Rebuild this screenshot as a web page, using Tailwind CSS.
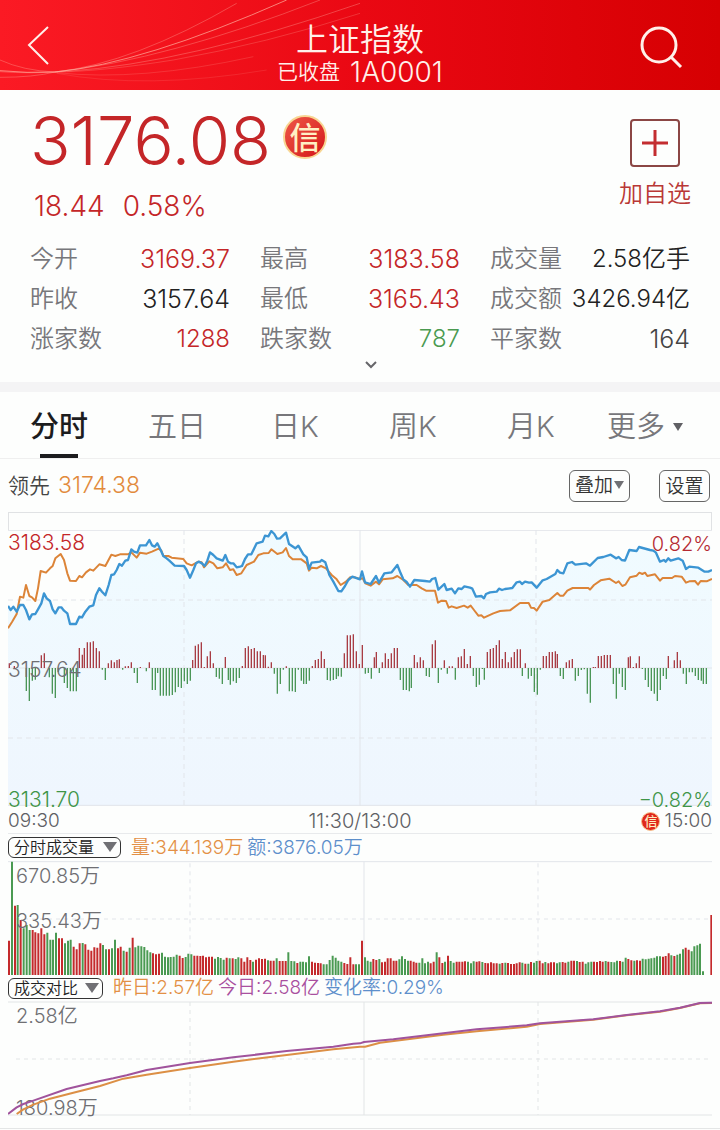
<!DOCTYPE html>
<html lang="zh-CN">
<head>
<meta charset="utf-8">
<meta name="viewport" content="width=device-width, initial-scale=1">
<title>上证指数 1A0001</title>
<script src="https://cdn.jsdelivr.net/npm/@tailwindcss/browser@4"></script>
</head>
<body class="bg-[#fdfefd] font-['Inter','Noto_Sans_CJK_SC',sans-serif] font-[350] text-[#6f6f73]">

<header class="relative flex h-[90px] items-center justify-between overflow-hidden bg-linear-to-r from-[#fb1a24] via-[#ea0813] to-[#d60002] text-[#fff0ea]">
  <svg class="absolute inset-y-0 left-0 h-[90px] w-[360px]" viewBox="0 0 1080 270" fill="none" stroke="#ffb0a0" stroke-width="3" aria-hidden="true">
    <path d="M0 180Q70 212 165 216Q400 190 710 10" opacity=".35"/>
    <path d="M0 212Q80 220 165 216Q430 190 860 0" opacity=".7"/>
    <path d="M0 232Q100 232 165 216Q500 180 960 0" opacity=".35"/>
    <path d="M0 215Q90 222 200 214Q560 190 1080 10" opacity=".35"/>
    <path d="M165 216Q300 215 520 180Q800 130 1080 40" opacity=".25"/>
    <path d="M170 218Q420 245 760 170" opacity=".2"/>
    <path d="M170 220Q440 270 800 210" opacity=".15"/>
  </svg>
  <button type="button" aria-label="返回" class="relative ml-6 w-16">
    <svg class="h-10 w-7" viewBox="0 0 28 40" fill="none" stroke="currentColor" stroke-width="2"><path d="M24 2 5 20 24 39"/></svg>
  </button>
  <div class="relative pt-[18px] text-center">
    <h1 class="text-[32px] leading-9 font-[350]">上证指数</h1>
    <p class="flex items-center justify-center gap-[10px] text-[21px] leading-7">已收盘 <span class="text-[28px]">1A0001</span></p>
  </div>
  <button type="button" aria-label="搜索" class="relative mr-8 flex w-14 justify-end pr-1">
    <svg class="h-12 w-11" viewBox="0 0 44 48" fill="none" stroke="currentColor" stroke-width="3"><circle cx="19" cy="24" r="17"/><path d="m31 36 10 10"/></svg>
  </button>
</header>

<main>
  <section class="px-[30px] pt-[18px] pb-3">
    <div class="flex items-start justify-between">
      <div>
        <div class="flex items-center gap-3 text-[#c42628]">
          <strong class="text-[67px] leading-[66px] font-[350]">3176.08</strong>
          <span class="-mt-2 flex size-11 items-center justify-center rounded-full border-2 border-[#f8d693] bg-linear-to-br from-[#ee5546] to-[#d40817] text-[31px] leading-none font-medium text-[#fff0c4]">信</span>
        </div>
        <p class="mt-3 flex gap-[18px] pl-1 text-[28px] leading-10 text-[#c42628]"><span>18.44</span><span>0.58%</span></p>
      </div>
      <button type="button" class="-mr-px mt-[11px] flex flex-col items-center gap-[9px] text-2xl leading-9 text-[#b93836]">
        <svg class="h-12 w-[50px]" viewBox="0 0 50 48" fill="none" stroke-width="2"><rect x="1" y="1" width="48" height="46" rx="3" stroke="#8b4644"/><path d="M12 24H38M25 11V37" stroke="#c32d30" stroke-width="3"/></svg>
        加自选
      </button>
    </div>
    <dl class="mt-[13px] grid grid-cols-3 gap-x-[30px] text-2xl leading-10 whitespace-nowrap text-[#222]">
      <div class="flex justify-between"><dt class="text-[#77777b]">今开</dt><dd class="text-[25px] leading-10 text-[#c42628]">3169.37</dd></div>
      <div class="flex justify-between"><dt class="text-[#77777b]">最高</dt><dd class="text-[25px] leading-10 text-[#c42628]">3183.58</dd></div>
      <div class="flex justify-between"><dt class="text-[#77777b]">成交量</dt><dd>2.58亿手</dd></div>
      <div class="flex justify-between"><dt class="text-[#77777b]">昨收</dt><dd class="text-[25px] leading-10">3157.64</dd></div>
      <div class="flex justify-between"><dt class="text-[#77777b]">最低</dt><dd class="text-[25px] leading-10 text-[#c42628]">3165.43</dd></div>
      <div class="flex justify-between"><dt class="text-[#77777b]">成交额</dt><dd>3426.94亿</dd></div>
      <div class="flex justify-between"><dt class="text-[#77777b]">涨家数</dt><dd class="text-[#c42628]">1288</dd></div>
      <div class="flex justify-between"><dt class="text-[#77777b]">跌家数</dt><dd class="text-[#4a9a50]">787</dd></div>
      <div class="flex justify-between"><dt class="text-[#77777b]">平家数</dt><dd class="text-[25px] leading-10 text-[#444]">164</dd></div>
    </dl>
    <button type="button" aria-label="展开" class="flex h-[11px] w-full items-center justify-center pl-[22px]">
      <svg class="h-2 w-3" viewBox="0 0 12 8" fill="none" stroke="#66666a" stroke-width="2"><path d="m1 1 5 5 5-5"/></svg>
    </button>
  </section>

  <div class="h-[10px] bg-[#f4f4f5]"></div>

  <nav class="grid h-[67px] grid-cols-6 border-b border-[#efefef] pr-3 text-[29px] text-[#77777b]">
    <button type="button" aria-current="true" class="flex flex-col items-center justify-between pt-[13px] font-medium text-[#1c1c1e]"><span class="leading-[44px]">分时</span><span class="h-1 w-[38px] bg-[#1c1c1e]"></span></button>
    <button type="button" class="pt-[13px] pb-[9px] leading-[44px]">五日</button>
    <button type="button" class="pt-[13px] pb-[9px] leading-[44px]">日K</button>
    <button type="button" class="pt-[13px] pb-[9px] leading-[44px]">周K</button>
    <button type="button" class="pt-[13px] pb-[9px] leading-[44px]">月K</button>
    <button type="button" class="flex items-center justify-center gap-2 pt-[13px] pr-2 pb-[9px] leading-[44px] whitespace-nowrap">更多<svg class="h-2 w-[10px]" viewBox="0 0 10 8" fill="#606064"><path d="M0 0H10L5 8Z"/></svg></button>
  </nav>

  <div class="flex h-[53px] items-center justify-between pr-[10px] pl-2">
    <p class="flex items-center gap-2 text-[23px] text-[#e28a3c]"><span class="text-[21px] text-[#444]">领先</span>3174.38</p>
    <div class="flex gap-[29px] text-[19px] text-[#333]">
      <button type="button" class="flex h-8 w-[61px] items-center justify-center gap-px rounded-md border border-[#666] pt-[2px]">叠加<svg class="-mt-1 h-2 w-[10px]" viewBox="0 0 10 8" fill="#707074"><path d="M0 0H10L5 8Z"/></svg></button>
      <button type="button" class="h-8 w-[51px] rounded-md border border-[#666] pt-[2px]">设置</button>
    </div>
  </div>

  <section class="px-2" aria-label="分时走势">
    <div class="h-[18px] border border-b-0 border-[#e0e2e4]"></div>
    <div class="relative h-[276px] text-[21px] leading-6">
      <svg class="block h-full w-full" viewBox="24 30 2112 828" preserveAspectRatio="none" fill="none">
        <defs>
          <linearGradient id="area" x1="0" y1="0" x2="0" y2="1"><stop offset="0" stop-color="#f0fbff"/><stop offset="1" stop-color="#eff6fe"/></linearGradient>
        </defs>
        <polygon id="priceArea" fill="url(#area)"/>
        <g stroke="#e2e5ea" stroke-width="3">
          <path d="M24 31H2136M24 856H2136M1080 30V858M24 444H2136"/>
          <path d="M552 30V858M1608 30V858M24 240H2136M24 654H2136" stroke-dasharray="15 12"/>
        </g>
        <g stroke-width="4">
          <path id="upBars" stroke="#a83c44"/>
          <path id="downBars" stroke="#4b9657"/>
        </g>
        <polyline id="avgLine" stroke="#dc8438" stroke-width="6" stroke-linejoin="round"/>
        <polyline id="priceLine" stroke="#3c95d3" stroke-width="7" stroke-linejoin="round"/>
      </svg>
      <span class="absolute top-px left-0 text-[#c42628]">3183.58</span>
      <span class="absolute top-[2px] right-0 text-xl leading-6 text-[#b52a32]">0.82%</span>
      <span class="absolute top-[128px] left-0">3157.64</span>
      <span class="absolute bottom-0 left-0 leading-3 text-[#3f9548]">3131.70</span>
      <span class="absolute right-0 bottom-0 text-xl leading-3 text-[#3f9548]">−0.82%</span>
    </div>
    <div class="grid h-7 grid-cols-3 items-center border-b border-[#e8eaec] pt-[3px] text-[19px] leading-6 text-[#606064]">
      <span>09:30</span>
      <span class="text-center text-xl leading-6">11:30/13:00</span>
      <span class="flex items-center justify-end gap-1"><span class="flex size-[19px] items-center justify-center rounded-full border border-[#f8c08c] bg-[#e0281c] text-[13px] leading-none font-medium text-[#fff0c4]">信</span>15:00</span>
    </div>
  </section>

  <section class="px-2" aria-label="分时成交量">
    <div class="flex h-[27px] items-center gap-[10px] text-[19px] leading-6">
      <div class="relative">
        <select aria-label="成交量指标" class="block h-[21px] w-[113px] appearance-none rounded-md border border-[#333] pl-[5px] text-base leading-[19px] text-[#222]"><option>分时成交量</option></select>
        <svg class="pointer-events-none absolute top-[5px] right-1 h-[10px] w-[14px]" viewBox="0 0 14 10" fill="#707074"><path d="M0 0H14L7 10Z"/></svg>
      </div>
      <p class="flex gap-1"><span class="text-[#e39045]">量:344.139万</span><span class="text-[#5d8fcb]">额:3876.05万</span></p>
    </div>
    <div class="relative h-[114px] text-xl leading-6">
      <svg class="block h-full w-full" viewBox="24 243 2112 342" preserveAspectRatio="none" fill="none">
        <g stroke="#e2e5ea" stroke-width="3">
          <path d="M24 245H2136M1092 245V585"/>
          <path d="M570 250V585M1614 250V585M48 417H2136" stroke-dasharray="12 12"/>
        </g>
        <g stroke-width="6">
          <path id="volUp" stroke="#c42a2c"/>
          <path id="volDown" stroke="#4a9a52"/>
        </g>
      </svg>
      <span class="absolute top-[3px] left-2">670.85万</span>
      <span class="absolute top-12 left-2">335.43万</span>
    </div>
  </section>

  <section class="border-b border-[#e4e6e6] px-2 pb-3" aria-label="成交对比">
    <div class="flex h-[26px] items-center gap-[10px] text-[19px] leading-6">
      <div class="relative">
        <select aria-label="对比指标" class="block h-[21px] w-[95px] appearance-none rounded-md border border-[#333] pl-[5px] text-base leading-[19px] text-[#222]"><option>成交对比</option></select>
        <svg class="pointer-events-none absolute top-[5px] right-1 h-[10px] w-[14px]" viewBox="0 0 14 10" fill="#707074"><path d="M0 0H14L7 10Z"/></svg>
      </div>
      <p class="flex gap-1"><span class="text-[#e39045]">昨日:2.57亿</span><span class="text-[#a9509f]">今日:2.58亿</span><span class="text-[#5d8fcb]">变化率:0.29%</span></p>
    </div>
    <div class="relative h-[115px] text-xl leading-6">
      <svg class="block h-full w-full" viewBox="24 93 2112 345" preserveAspectRatio="none" fill="none">
        <g stroke="#e2e5e6" stroke-width="3">
          <path d="M24 96H2136M24 435H2136M1092 96V435"/>
          <path d="M570 96V435M1614 96V435M48 267H2136" stroke-dasharray="12 12"/>
        </g>
      </svg>
      <span class="absolute top-[3px] left-2">2.58亿</span>
      <span class="absolute bottom-0 left-2 leading-4">180.98万</span>
      <svg class="absolute inset-0 h-full w-full" viewBox="24 93 2112 345" preserveAspectRatio="none" fill="none" stroke-width="6" stroke-linejoin="round">
        <polyline stroke="#dc8f45" points="50,432 70,418 100,404 150,386 220,368 300,348 370,326 440,314 570,294 700,275 860,255 1000,238 1080,230 1095,230 1140,218 1330,194 1430,184 1580,170 1620,162 1780,149 1880,136 1980,125 2040,114 2100,100 2136,99"/>
        <polyline stroke="#a0539c" points="24,432 50,412 70,402 100,392 200,357 300,333 340,325 380,316 440,300 570,279 700,262 860,243 1000,230 1060,221 1080,220 1092,216 1180,208 1330,190 1430,178 1580,166 1620,160 1780,148 1880,135 1980,124 2040,113 2100,99 2136,98"/>
      </svg>
    </div>
  </section>
</main>

<script>
  const price = "24,258 32,270 40,260 50,275 60,255 70,255 78,270 88,298 96,283 106,282 114,268 124,250 132,220 140,235 150,243 158,268 166,280 176,262 184,262 192,272 202,280 210,312 228,312 238,290 246,292 256,275 268,260 280,256 288,225 298,205 306,215 316,226 326,195 334,165 342,163 350,150 358,132 366,137 376,122 384,120 394,88 402,95 412,98 420,76 438,76 448,60 456,76 464,80 472,70 482,90 490,108 500,115 508,122 524,137 552,138 560,150 570,173 580,150 588,130 596,125 606,130 614,138 622,122 630,97 640,105 650,115 668,122 676,105 684,125 692,130 700,130 710,142 720,140 726,138 735,117 744,103 754,103 770,70 788,65 795,47 805,49 814,33 823,42 831,56 840,55 858,38 867,72 886,85 895,77 910,103 920,112 927,147 935,128 960,125 965,120 976,127 988,165 1000,185 1015,213 1024,214 1035,198 1045,180 1057,170 1080,178 1086,154 1095,187 1112,192 1128,168 1137,188 1153,160 1175,157 1192,135 1202,160 1210,178 1220,186 1230,200 1243,180 1275,183 1290,185 1296,177 1306,174 1315,209 1333,192 1340,210 1355,206 1365,220 1375,205 1385,207 1393,199 1410,203 1417,206 1428,230 1444,228 1452,235 1458,222 1470,217 1490,215 1497,206 1506,210 1515,207 1537,204 1550,187 1560,185 1566,192 1575,185 1587,188 1595,187 1610,203 1628,181 1640,177 1666,162 1672,150 1680,158 1690,160 1702,130 1716,126 1726,134 1758,130 1770,137 1793,114 1810,111 1832,104 1848,115 1856,111 1865,120 1875,122 1888,90 1910,93 1917,81 1950,90 1960,92 1968,98 1980,125 1992,120 1997,125 2005,115 2012,122 2035,115 2048,122 2058,147 2068,140 2095,143 2114,155 2125,155 2136,150";
  const average = "24,325 36,306 50,282 60,230 70,233 78,195 88,228 96,232 106,243 114,205 122,153 138,158 150,145 158,138 166,115 182,102 192,120 202,160 210,182 228,183 238,168 246,172 258,157 270,148 280,152 298,133 316,138 334,104 346,108 360,103 384,103 394,97 410,113 420,98 440,101 456,95 476,86 484,92 490,108 505,108 515,113 550,117 560,130 575,136 595,125 605,127 612,142 628,124 640,130 652,145 668,142 678,130 690,150 700,148 710,165 724,160 740,135 762,125 775,105 790,100 806,99 814,88 832,102 848,97 858,84 867,108 878,118 904,118 920,130 927,152 935,143 950,145 963,138 978,145 995,165 1010,178 1022,195 1038,185 1050,172 1065,172 1080,177 1088,175 1096,190 1112,197 1128,185 1137,193 1148,178 1178,175 1192,168 1210,180 1225,195 1250,195 1265,205 1278,212 1305,212 1314,248 1325,242 1338,243 1346,263 1355,259 1370,264 1392,257 1403,263 1412,257 1422,270 1435,287 1444,286 1452,293 1480,280 1500,273 1530,271 1560,249 1586,249 1593,263 1602,264 1610,272 1628,245 1648,240 1672,219 1680,227 1690,227 1702,212 1718,204 1765,204 1770,209 1782,195 1802,181 1828,176 1848,189 1856,184 1867,198 1876,194 1890,172 1910,167 1918,158 1927,162 1935,158 1942,168 1965,163 1980,182 1988,174 2016,174 2025,168 2045,170 2058,188 2068,184 2085,183 2094,194 2102,183 2120,184 2136,177";
  const byId = id => document.getElementById(id);
  byId("priceLine").setAttribute("points", price);
  byId("avgLine").setAttribute("points", average);
  byId("priceArea").setAttribute("points", price + " 2136,858 24,858");

  // x and signed height of each momentum bar; positive values rise above the previous close
  const momentum = "28,14 43,6 79,-69 88,-99 97,-38 106,-35 124,38 133,44 148,-28 157,-77 166,-90 175,-12 193,-45 202,-60 211,-70 220,-70 229,-70 238,60 247,40 253,60 262,77 271,77 280,80 289,60 298,50 307,-5 316,-36 325,14 334,23 343,17 351,24 358,26 368,-5 376,5 385,6 394,17 403,-15 412,-45 421,3 439,-10 448,17 457,-66 466,-66 473,-15 481,-83 490,-83 499,-83 508,-83 517,-81 526,-73 535,-57 544,-60 553,-40 562,-48 571,-38 578,24 586,67 595,71 604,77 613,3 622,35 631,50 640,14 649,-27 658,-32 667,-48 676,33 685,-36 691,-50 700,-40 709,-45 718,-30 727,6 736,60 745,65 754,57 763,60 772,50 781,50 790,39 796,38 805,4 814,17 823,-17 832,-77 841,-48 850,-5 859,5 868,-70 877,-70 886,-72 895,-5 904,-38 911,-48 919,-48 928,-38 937,6 946,24 955,27 964,50 973,27 982,-36 991,-38 1000,-36 1009,-33 1015,-25 1024,-26 1033,44 1042,98 1051,98 1060,101 1069,50 1078,12 1087,69 1096,-17 1105,-15 1114,-32 1123,32 1129,48 1138,-15 1147,17 1156,44 1165,27 1174,44 1183,60 1192,60 1201,-36 1210,-66 1219,-66 1228,-70 1234,-60 1243,39 1252,17 1261,32 1270,23 1279,-24 1288,-27 1297,71 1306,83 1315,-45 1324,-5 1333,23 1342,-17 1348,5 1357,5 1366,-35 1375,32 1384,35 1393,57 1402,12 1411,36 1420,-24 1429,-57 1438,-50 1447,-3 1453,-35 1462,48 1471,57 1480,60 1489,69 1498,83 1507,27 1516,48 1525,17 1534,32 1543,48 1552,56 1561,56 1567,-24 1576,14 1585,-32 1594,-24 1603,-72 1612,-80 1621,-5 1630,36 1639,36 1648,48 1657,48 1666,50 1672,42 1681,-24 1690,-33 1699,17 1708,23 1717,27 1726,-38 1735,-24 1744,-6 1753,-4 1762,-77 1771,-104 1780,3 1786,3 1795,36 1804,36 1813,39 1822,39 1831,39 1840,-48 1849,-92 1858,-17 1867,-57 1876,-66 1885,32 1891,35 1900,3 1909,14 1918,35 1927,-3 1936,-36 1945,-57 1954,-69 1963,-77 1972,-99 1981,-66 1990,-24 1999,-33 2005,36 2023,23 2032,48 2041,23 2050,-17 2059,-48 2068,-13 2077,-13 2086,-24 2095,-36 2104,-38 2110,-48 2119,-48";
  let up = "", down = "";
  for (const bar of momentum.split(" ")) {
    const [x, h] = bar.split(",").map(Number);
    const segment = `M${x} 444V${444 - h}`;
    if (h > 0) up += segment; else down += segment;
  }
  byId("upBars").setAttribute("d", up);
  byId("downBars").setAttribute("d", down);

  // one volume bar per sample: r = rising, g = falling
  const volume = "r103 g340 r208 g210 r165 g140 g150 g135 r135 r128 r125 r140 r122 g127 g106 g106 g127 r110 r110 g95 g103 g106 r85 r77 r95 g96 r92 r76 r73 r83 r82 r95 g90 g77 r77 g80 g106 r80 r85 g73 r70 g82 r112 g83 g88 g86 g84 g74 g68 r65 r62 r64 g67 g55 g53 g54 g55 g61 r58 r51 g54 g64 g62 r58 r58 r57 r58 r53 r55 r55 g49 g54 g51 g46 r52 g50 r50 g48 g53 r50 r40 r53 r45 g40 r46 r50 r48 r49 g44 r43 r43 g50 r42 r42 r42 g68 g42 g41 r36 g40 g40 g38 g56 r40 r37 r36 r35 g32 g32 g45 g58 g52 g43 g40 r36 r33 r53 r32 g32 g32 r103 g53 g43 g40 r48 r45 g48 r38 r40 r50 r50 r43 r43 g47 g56 g48 g43 r43 r40 r37 g37 g50 g35 g40 r35 r40 g68 r53 r36 g40 r58 g42 g37 r40 r40 r40 r41 g40 g35 g41 r40 r41 g39 r36 r35 r38 r35 r35 g34 r36 g37 r36 r33 r33 r35 r38 g37 r34 g34 r39 g37 g42 r43 r35 g39 r35 r38 r38 g35 g38 r39 r37 g40 r43 r43 g42 r39 r40 g34 g38 g40 r40 r39 r42 r40 g42 r40 g39 g38 g43 r42 g40 g52 r48 r44 g43 r44 r43 g49 g47 g49 g50 g52 g56 g56 r55 r57 r65 g59 r57 g61 g64 g77 r82 r76 g71 g86 g89 g94 g11".split(" ");
  const edge = volume.indexOf("r103", 1);
  up = ""; down = "";
  // morning bars run up to x = 1086, afternoon bars from there to x = 2109
  volume.forEach((bar, i) => {
    const x = i < edge ? 27 + i * (1059 / edge) : 1086 + (i - edge) * (1023 / (volume.length - 1 - edge));
    const segment = `M${Math.round(x)} 585V${585 - Number(bar.slice(1))}`;
    if (bar[0] === "r") up += segment; else down += segment;
  });
  up += "M2134 585V405";
  byId("volUp").setAttribute("d", up);
  byId("volDown").setAttribute("d", down);
</script>
</body>
</html>
